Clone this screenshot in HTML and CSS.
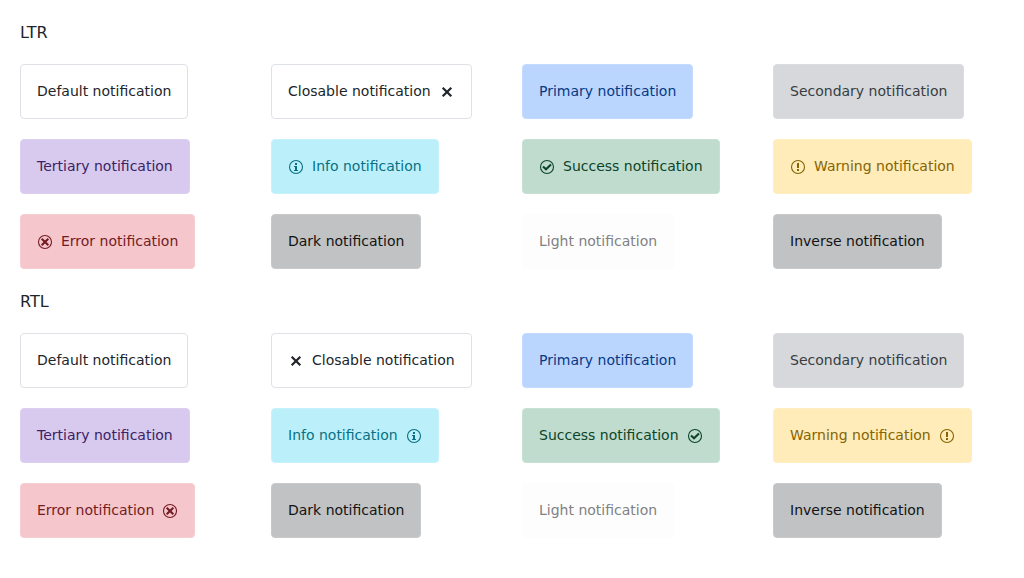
FILE: index.html
```html
<!DOCTYPE html>
<html lang="en">
<head>
<meta charset="utf-8">
<title>Notifications</title>
<link rel="stylesheet" href="styles.css">
</head>
<body>
<svg class="sprite" aria-hidden="true">
  <symbol id="close" viewBox="0 0 16 16"><path d="M3.7 3.7 12.3 12.3M12.3 3.7 3.7 12.3" fill="none" stroke="currentColor" stroke-width="2.2"/></symbol>
  <symbol id="info" viewBox="0 0 16 16"><circle cx="8" cy="8" r="6.5" fill="none" stroke="currentColor" stroke-width="1.1"/><path d="M7 4h2v2H7zM6 7h3v4h1v1H6v-1h1V8H6z" fill="currentColor"/></symbol>
  <symbol id="success" viewBox="0 0 16 16"><circle cx="8" cy="8" r="6.5" fill="none" stroke="currentColor" stroke-width="1.1"/><path d="M4 7.4 7 10.3l5-4.9" fill="none" stroke="currentColor" stroke-width="2.1"/></symbol>
  <symbol id="warning" viewBox="0 0 16 16"><circle cx="8" cy="8" r="6.5" fill="none" stroke="currentColor" stroke-width="1.1"/><path d="M7 4h2v5H7zM7 10h2v2H7z" fill="currentColor"/></symbol>
  <symbol id="error" viewBox="0 0 16 16"><circle cx="8" cy="8" r="6.5" fill="none" stroke="currentColor" stroke-width="1.1"/><path d="m4.7 4.7 6.6 6.6M11.3 4.7l-6.6 6.6" fill="none" stroke="currentColor" stroke-width="2.1"/></symbol>
</svg>
<main class="page">
  <section class="group">
    <h2 class="title">LTR</h2>
    <div class="grid">
      <div class="note">Default notification</div>
      <div class="note">Closable notification<svg class="icon"><use href="#close"/></svg></div>
      <div class="note primary">Primary notification</div>
      <div class="note secondary">Secondary notification</div>
      <div class="note tertiary">Tertiary notification</div>
      <div class="note info"><svg class="icon"><use href="#info"/></svg>Info notification</div>
      <div class="note success"><svg class="icon"><use href="#success"/></svg>Success notification</div>
      <div class="note warning"><svg class="icon"><use href="#warning"/></svg>Warning notification</div>
      <div class="note error"><svg class="icon"><use href="#error"/></svg>Error notification</div>
      <div class="note dark">Dark notification</div>
      <div class="note light">Light notification</div>
      <div class="note dark">Inverse notification</div>
    </div>
  </section>
  <section class="group rtl">
    <h2 class="title">RTL</h2>
    <div class="grid">
      <div class="note">Default notification</div>
      <div class="note">Closable notification<svg class="icon"><use href="#close"/></svg></div>
      <div class="note primary">Primary notification</div>
      <div class="note secondary">Secondary notification</div>
      <div class="note tertiary">Tertiary notification</div>
      <div class="note info"><svg class="icon"><use href="#info"/></svg>Info notification</div>
      <div class="note success"><svg class="icon"><use href="#success"/></svg>Success notification</div>
      <div class="note warning"><svg class="icon"><use href="#warning"/></svg>Warning notification</div>
      <div class="note error"><svg class="icon"><use href="#error"/></svg>Error notification</div>
      <div class="note dark">Dark notification</div>
      <div class="note light">Light notification</div>
      <div class="note dark">Inverse notification</div>
    </div>
  </section>
</main>
</body>
</html>
```
FILE: styles.css
```css
* { box-sizing: border-box; }
body {
  margin: 0;
  background: #fff;
  color: #212529;
  font: 14px/21px "DejaVu Sans", sans-serif;
}
.sprite { display: none; }
.page {
  display: flex;
  flex-direction: column;
  gap: 20px;
  padding: 20px;
}
.title {
  margin: 0 0 18px;
  font-size: 16px;
  font-weight: 400;
  line-height: 26px;
}
.grid {
  display: grid;
  grid-template-columns: repeat(4, 1fr);
  gap: 20px;
  justify-items: start;
}
.note {
  display: flex;
  align-items: center;
  gap: 8px;
  padding: 16px;
  border: 1px solid #dee2e6;
  border-radius: 4px;
  white-space: nowrap;
}
.rtl .note { flex-direction: row-reverse; }
.icon { width: 16px; height: 16px; }
.primary { color: #073984; background: #bad6ff; border-color: #c2dbff; }
.secondary { color: #383d41; background: #d6d8db; border-color: #dadce0; }
.tertiary { color: #3a2264; background: #d8caee; border-color: #dccff0; }
.info { color: #087083; background: #bbf0fb; border-color: #c5f2fc; }
.success { color: #0d4429; background: #bfdccf; border-color: #c7e1d5; }
.warning { color: #856404; background: #ffecb8; border-color: #ffeec2; }
.error { color: #721c24; background: #f5c6cb; border-color: #f6cdd1; }
.dark { color: #111315; background: #c1c2c3; border-color: #c8c9ca; }
.light { color: #818182; background: #fdfdfe; border-color: #fdfdfe; }
```
